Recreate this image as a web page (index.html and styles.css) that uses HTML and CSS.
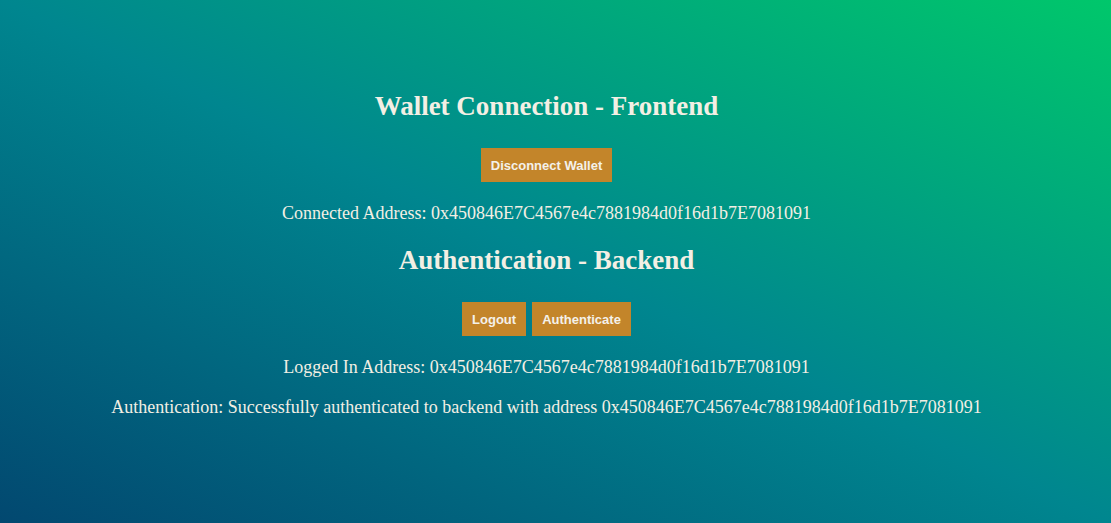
FILE: index.html
```html
<!DOCTYPE html>
<html>
<head>
<meta charset="utf-8">
<link rel="stylesheet" href="styles.css">
</head>
<body>
<main class="app">
  <h1 class="title">Wallet Connection - Frontend</h1>
  <div class="actions">
    <button class="btn">Disconnect Wallet</button>
  </div>
  <p class="info">Connected Address: 0x450846E7C4567e4c7881984d0f16d1b7E7081091</p>
  <h1 class="title">Authentication - Backend</h1>
  <div class="actions">
    <button class="btn">Logout</button>
    <button class="btn">Authenticate</button>
  </div>
  <p class="info">Logged In Address: 0x450846E7C4567e4c7881984d0f16d1b7E7081091</p>
  <p class="info">Authentication: Successfully authenticated to backend with address 0x450846E7C4567e4c7881984d0f16d1b7E7081091</p>
</main>
</body>
</html>
```
FILE: styles.css
```css
html, body {
  margin: 0;
  height: 100%;
}
body {
  background: linear-gradient(to top right, #024870 0%, #00868f 50%, #00c76b 100%);
  font-family: "Liberation Serif", "Times New Roman", serif;
  color: #f3efe4;
}
.app {
  display: flex;
  flex-direction: column;
  align-items: center;
  padding: 88px 18px 0 0;
  text-align: center;
}
.title {
  font-size: 27px;
  font-weight: bold;
  margin: 0;
  line-height: 36px;
}
.actions {
  display: flex;
  gap: 6px;
  margin: 24px 0 20px;
}
.btn {
  background: #c3852a;
  color: #f4f1ea;
  border: none;
  font-family: "Liberation Sans", Arial, sans-serif;
  font-weight: bold;
  font-size: 13px;
  height: 34px;
  padding: 0 10px;
  cursor: pointer;
}
.info {
  font-size: 18px;
  margin: 0 0 18px;
  line-height: 22px;
}
```
